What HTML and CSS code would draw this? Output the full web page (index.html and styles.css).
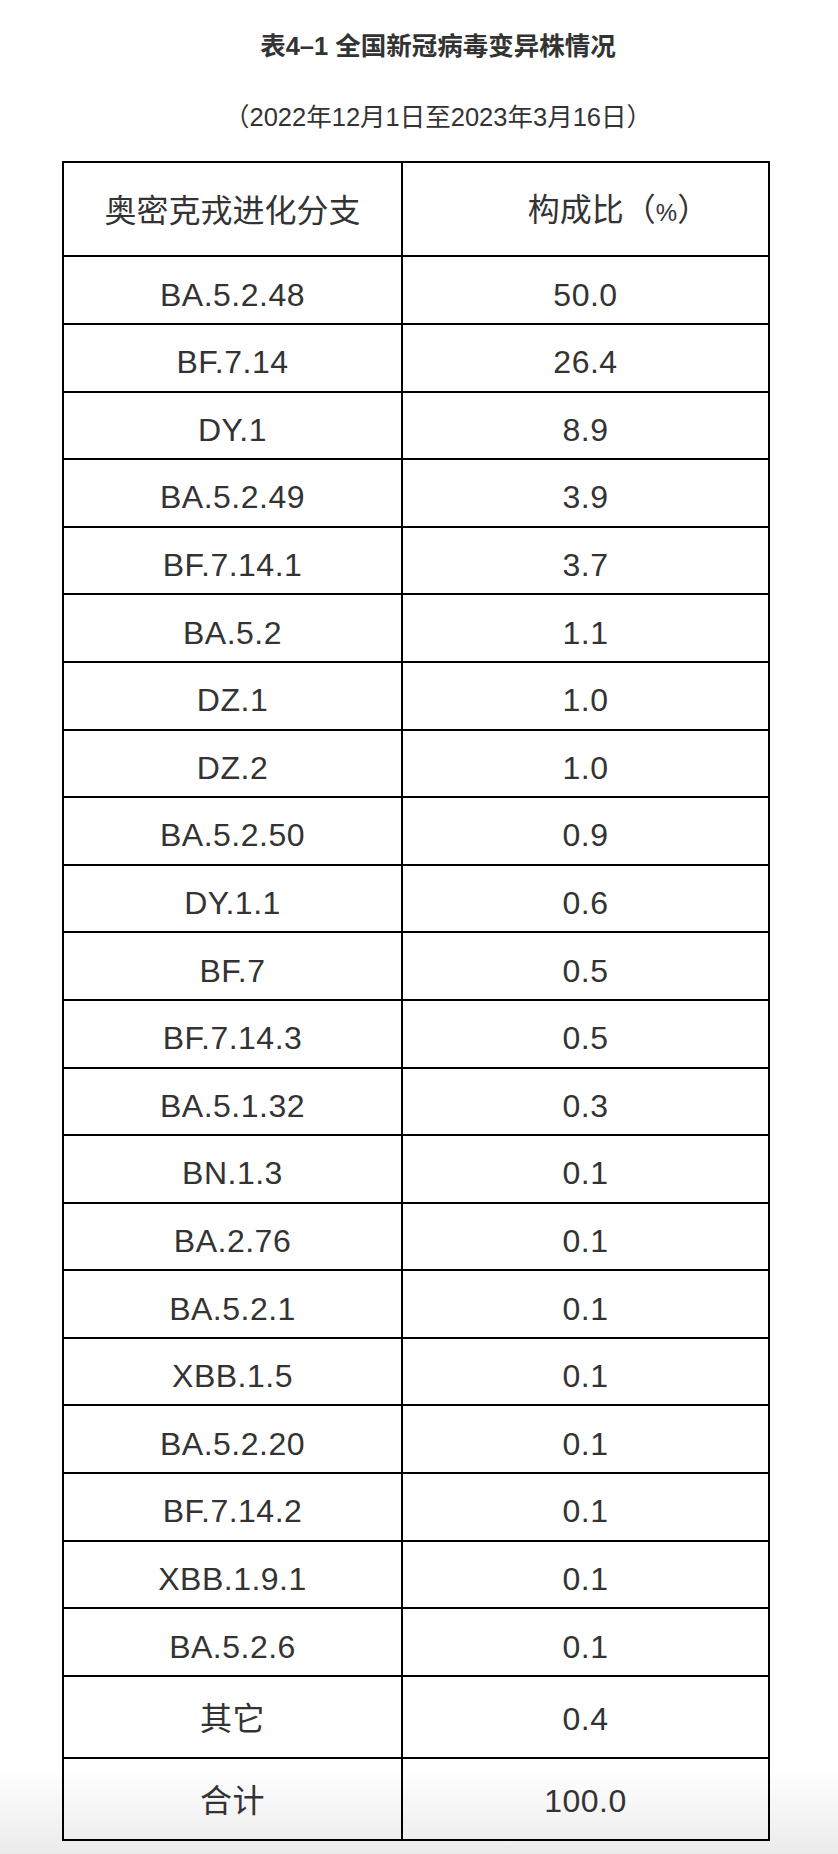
FILE: index.html
```html
<!DOCTYPE html>
<html lang="zh-CN">
<head>
<meta charset="utf-8">
<title>表4-1 全国新冠病毒变异株情况</title>
<link rel="stylesheet" href="styles.css">
</head>
<body>
<div class="page">
  <h1 class="title">表4–1 全国新冠病毒变异株情况</h1>
  <p class="subtitle">（2022年12月1日至2023年3月16日）</p>
  <table class="variants">
    <colgroup><col class="col-name"><col class="col-ratio"></colgroup>
    <thead>
      <tr class="head-row"><th>奥密克戎进化分支</th><th class="ratio-head">构成比（<span class="pct">%</span>）</th></tr>
    </thead>
    <tbody>
      <tr><td>BA.5.2.48</td><td>50.0</td></tr>
      <tr><td>BF.7.14</td><td>26.4</td></tr>
      <tr><td>DY.1</td><td>8.9</td></tr>
      <tr><td>BA.5.2.49</td><td>3.9</td></tr>
      <tr><td>BF.7.14.1</td><td>3.7</td></tr>
      <tr><td>BA.5.2</td><td>1.1</td></tr>
      <tr><td>DZ.1</td><td>1.0</td></tr>
      <tr><td>DZ.2</td><td>1.0</td></tr>
      <tr><td>BA.5.2.50</td><td>0.9</td></tr>
      <tr><td>DY.1.1</td><td>0.6</td></tr>
      <tr><td>BF.7</td><td>0.5</td></tr>
      <tr><td>BF.7.14.3</td><td>0.5</td></tr>
      <tr><td>BA.5.1.32</td><td>0.3</td></tr>
      <tr><td>BN.1.3</td><td>0.1</td></tr>
      <tr><td>BA.2.76</td><td>0.1</td></tr>
      <tr><td>BA.5.2.1</td><td>0.1</td></tr>
      <tr><td>XBB.1.5</td><td>0.1</td></tr>
      <tr><td>BA.5.2.20</td><td>0.1</td></tr>
      <tr><td>BF.7.14.2</td><td>0.1</td></tr>
      <tr><td>XBB.1.9.1</td><td>0.1</td></tr>
      <tr><td>BA.5.2.6</td><td>0.1</td></tr>
      <tr class="tall"><td>其它</td><td>0.4</td></tr>
      <tr class="tall"><td>合计</td><td>100.0</td></tr>
    </tbody>
  </table>
</div>
</body>
</html>
```

FILE: styles.css
```css
html {
  margin: 0;
  padding: 0;
  min-height: 1854px;
  background: linear-gradient(to bottom, #ffffff 0, #ffffff 1768px, #ebebeb 1854px);
}

body {
  margin: 0;
  padding: 0;
  font-family: "Liberation Sans", "Noto Sans CJK SC", sans-serif;
  color: #333333;
}

.page {
  padding-top: 30px;
}

.title {
  margin: 0;
  padding-left: 38px;
  font-size: 25.5px;
  line-height: 32px;
  font-weight: bold;
  text-align: center;
  color: #333333;
}

.subtitle {
  margin: 39px 0 0;
  padding-left: 38px;
  font-size: 25.5px;
  line-height: 32px;
  text-align: center;
  color: #333333;
}

.variants {
  margin: 28px 0 0 62px;
  width: 708px;
  border-collapse: collapse;
  table-layout: fixed;
  font-size: 32px;
}

.col-name {
  width: 339px;
}

.variants th,
.variants td {
  border: 2px solid #000000;
  padding: 9px 0 0;
  text-align: center;
  vertical-align: middle;
  font-weight: normal;
  line-height: 40px;
  height: 56.6px;
  color: #333333;
}

.variants td {
  letter-spacing: 0.5px;
}

.variants .head-row th {
  padding-top: 4px;
  height: 88.4px;
}

.variants .ratio-head {
  padding-left: 66px;
}

.pct {
  font-size: 24px;
}

.variants .tall td {
  padding-top: 4px;
  height: 76px;
}
```
